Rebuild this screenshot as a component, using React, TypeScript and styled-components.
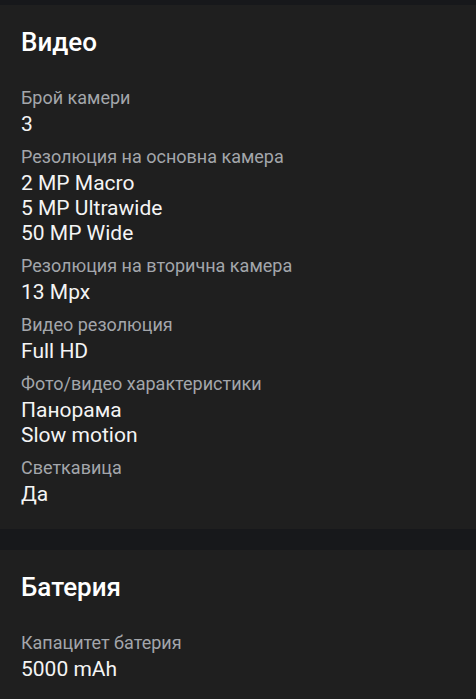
import styled, { createGlobalStyle } from 'styled-components';

interface Spec {
  label: string;
  values: string[];
}

interface Section {
  title: string;
  specs: Spec[];
}

const SECTIONS: Section[] = [
  {
    title: 'Видео',
    specs: [
      { label: 'Брой камери', values: ['3'] },
      { label: 'Резолюция на основна камера', values: ['2 MP Macro', '5 MP Ultrawide', '50 MP Wide'] },
      { label: 'Резолюция на вторична камера', values: ['13 Mpx'] },
      { label: 'Видео резолюция', values: ['Full HD'] },
      { label: 'Фото/видео характеристики', values: ['Панорама', 'Slow motion'] },
      { label: 'Светкавица', values: ['Да'] },
    ],
  },
  {
    title: 'Батерия',
    specs: [{ label: 'Капацитет батерия', values: ['5000 mAh'] }],
  },
];

const GlobalStyle = createGlobalStyle`
  html, body {
    margin: 0;
    padding: 0;
    background: #17181b;
    font-family: Roboto, 'Noto Sans', 'Liberation Sans', sans-serif;
    -webkit-font-smoothing: antialiased;
  }
`;

export default function App() {
  return (
    <>
      <GlobalStyle />
      <Page>
        {SECTIONS.map((section) => (
          <Card key={section.title}>
            <Title>{section.title}</Title>
            <SpecList>
              {section.specs.map((spec) => (
                <SpecItem key={spec.label}>
                  <Label>{spec.label}</Label>
                  <Values>
                    {spec.values.map((v) => (
                      <Value key={v}>{v}</Value>
                    ))}
                  </Values>
                </SpecItem>
              ))}
            </SpecList>
          </Card>
        ))}
      </Page>
    </>
  );
}

const Page = styled.div`
  display: flex;
  flex-direction: column;
  gap: 21px;
  padding-top: 5px;
  min-height: 699px;
  box-sizing: border-box;
`;

const Card = styled.section`
  background: #1f1f1f;
  padding: 21px 21px 22px 21px;
  display: flex;
  flex-direction: column;
  gap: 28px;
`;

const Title = styled.h2`
  margin: 0;
  font-size: 26px;
  line-height: 32px;
  font-weight: 500;
  color: #ffffff;
`;

const SpecList = styled.div`
  display: flex;
  flex-direction: column;
  gap: 8px;
`;

const SpecItem = styled.div`
  display: flex;
  flex-direction: column;
  gap: 2px;
`;

const Label = styled.div`
  font-size: 18px;
  line-height: 24px;
  color: #a3a6ab;
`;

const Values = styled.div`
  display: flex;
  flex-direction: column;
`;

const Value = styled.div`
  font-size: 21px;
  line-height: 25px;
  color: #f4f4f4;
`;
